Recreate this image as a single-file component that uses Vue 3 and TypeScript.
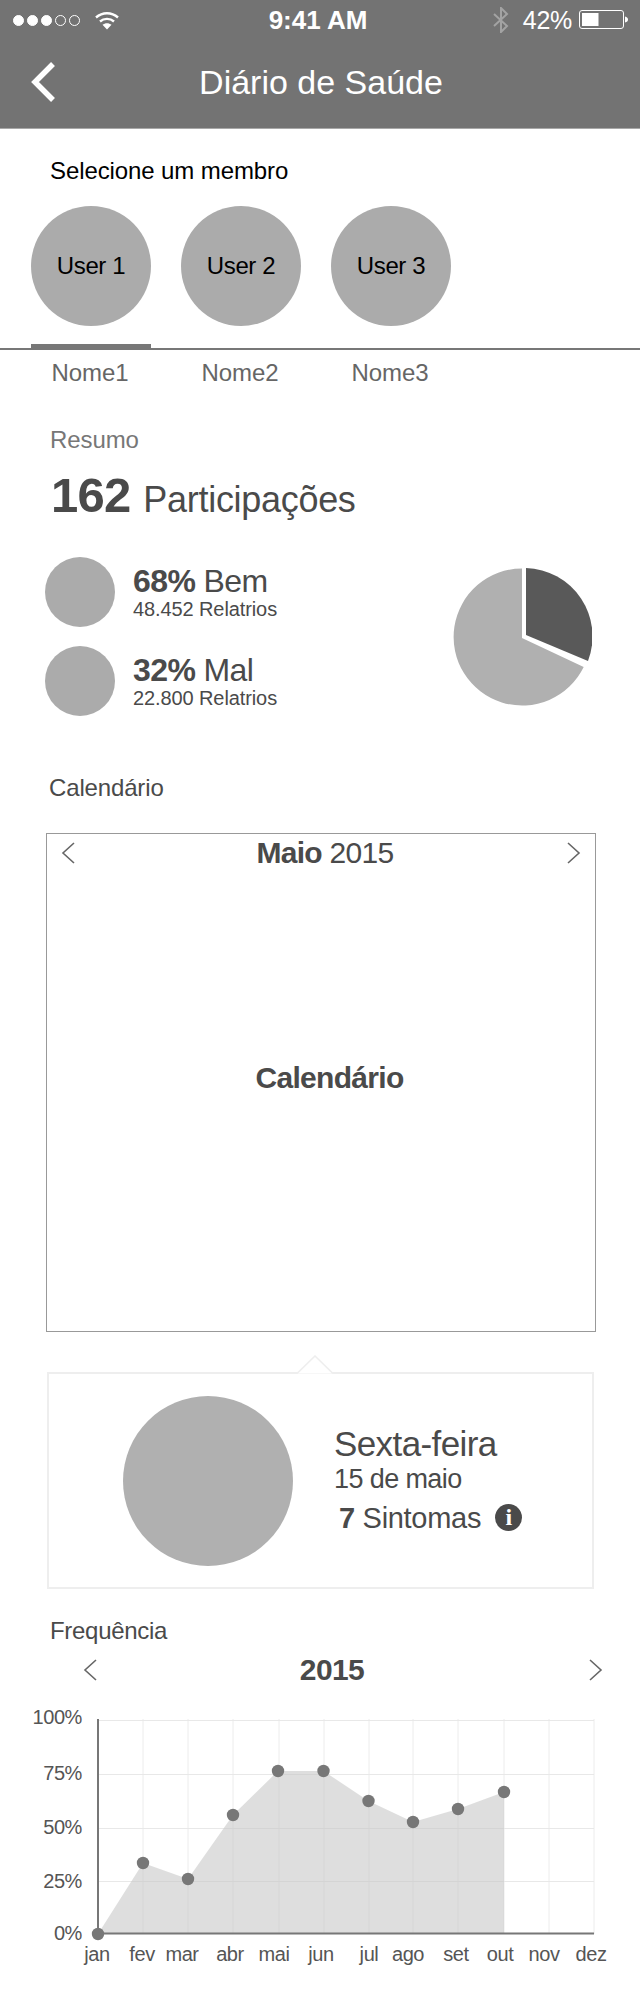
<script setup lang="ts">
const users = [
  { label: 'User 1', name: 'Nome1', active: true },
  { label: 'User 2', name: 'Nome2', active: false },
  { label: 'User 3', name: 'Nome3', active: false },
]
const stats = [
  { pct: '68%', word: 'Bem', sub: '48.452 Relatrios' },
  { pct: '32%', word: 'Mal', sub: '22.800 Relatrios' },
]
const xGrid = [143, 188, 233, 279, 324, 369, 413, 458, 504, 549, 594]
const yGrid = [1, 55, 109, 162]
const pts: [number, number][] = [
  [98, 215], [143, 144], [188, 160], [233, 96], [278, 52],
  [323.5, 52], [368.5, 82], [413, 103], [458, 90], [504, 73],
]
const area = 'M98 215 ' + pts.map(p => `L${p[0]} ${p[1]}`).join(' ') + ' L504 215 Z'
const yLabels = [
  { t: '100%', y: 5 }, { t: '75%', y: 61 }, { t: '50%', y: 115 }, { t: '25%', y: 169 }, { t: '0%', y: 221 },
]
const xLabels = [
  { t: 'jan', x: 97 }, { t: 'fev', x: 142 }, { t: 'mar', x: 182 }, { t: 'abr', x: 230 },
  { t: 'mai', x: 274 }, { t: 'jun', x: 321 }, { t: 'jul', x: 369 }, { t: 'ago', x: 408 },
  { t: 'set', x: 456 }, { t: 'out', x: 500 }, { t: 'nov', x: 544 }, { t: 'dez', x: 591 },
]
</script>

<template>
  <div class="page">
    <header class="head">
      <div class="status">
        <div class="st-left">
          <span class="dot on"></span><span class="dot on"></span><span class="dot on"></span><span class="dot"></span><span class="dot"></span>
          <svg class="wifi" width="24" height="19" viewBox="0 0 24 19">
            <path d="M1 6.5C7.5 .8 16.5 .8 23 6.5" fill="none" stroke="#fff" stroke-width="2.4" />
            <path d="M5 10.5C9 7 15 7 19 10.5" fill="none" stroke="#fff" stroke-width="2.4" />
            <path d="M7.5 13.8C10 11.6 14 11.6 16.5 13.8L12 18.5Z" fill="#fff" />
          </svg>
        </div>
        <div class="time">9:41 AM</div>
        <div class="st-right">
          <svg class="bt" width="16" height="26" viewBox="0 0 16 26">
            <path d="M1 7L14 19L8 25V1L14 7L1 19" fill="none" stroke="#a3a3a3" stroke-width="2" />
          </svg>
          <span class="pct">42%</span>
          <svg class="batt" width="50" height="20" viewBox="0 0 50 20">
            <rect x=".5" y=".5" width="44" height="18" rx="2.5" fill="none" stroke="#fff" />
            <rect x="3" y="3" width="16.5" height="13" fill="#fff" />
            <path d="M46 6.5C48 7 49 8 49 9.5S48 12 46 12.5Z" fill="#fff" />
          </svg>
        </div>
      </div>
      <div class="nav">
        <svg class="back" width="26" height="42" viewBox="0 0 26 42">
          <path d="M23 3L5 21L23 39" fill="none" stroke="#fff" stroke-width="5.5" />
        </svg>
        <h1>Diário de Saúde</h1>
      </div>
    </header>

    <section class="members">
      <div class="lead">Selecione um membro</div>
      <div class="tabs">
        <div v-for="u in users" :key="u.name" class="tab">
          <div class="avatar">{{ u.label }}</div>
          <div class="bar" :class="{ active: u.active }"></div>
        </div>
      </div>
      <div class="names">
        <div v-for="u in users" :key="u.name" class="name">{{ u.name }}</div>
      </div>
    </section>

    <section class="summary">
      <div class="sec-muted">Resumo</div>
      <div class="total"><b>162</b> <span class="total-word">Participações</span></div>
      <div class="stat-row">
        <div class="stats">
          <div v-for="s in stats" :key="s.word" class="stat">
            <div class="stat-dot"></div>
            <div>
              <div class="stat-main"><b>{{ s.pct }}</b> {{ s.word }}</div>
              <div class="stat-sub">{{ s.sub }}</div>
            </div>
          </div>
        </div>
        <svg class="pie" width="140" height="140" viewBox="0 0 140 140">
          <path d="M70 71L70 1.5A68.5 68.5 0 1 0 131.7 100Z" fill="#b0b0b0" />
          <path d="M74 68L74 1A68.5 68.5 0 0 1 136 94Z" fill="#595959" />
        </svg>
      </div>
    </section>

    <section class="calendar">
      <div class="sec-title">Calendário</div>
      <div class="cal-box">
        <div class="cal-head">
          <svg class="chev" width="14" height="22" viewBox="0 0 14 22"><path d="M13 1L2 11L13 21" /></svg>
          <div class="cal-month"><b>Maio</b> 2015</div>
          <svg class="chev" width="14" height="22" viewBox="0 0 14 22"><path d="M1 1L12 11L1 21" /></svg>
        </div>
        <div class="cal-body">Calendário</div>
      </div>
      <div class="pop">
        <svg class="pop-arrow" width="38" height="19" viewBox="0 0 38 19">
          <path d="M1 18.5L19 1L37 18.5" fill="#fff" stroke="#eee" stroke-width="1.5" />
        </svg>
        <div class="pop-dot"></div>
        <div class="pop-text">
          <div class="pop-day">Sexta-feira</div>
          <div class="pop-date">15 de maio</div>
          <div class="pop-sym"><span><b>7</b> Sintomas</span><span class="info">i</span></div>
        </div>
      </div>
    </section>

    <section class="freq">
      <div class="sec-freq">Frequência</div>
      <div class="freq-head">
        <svg class="chev" width="14" height="22" viewBox="0 0 14 22"><path d="M13 1L2 11L13 21" /></svg>
        <div class="freq-year">2015</div>
        <svg class="chev" width="14" height="22" viewBox="0 0 14 22"><path d="M1 1L12 11L1 21" /></svg>
      </div>
      <svg class="chart" width="640" height="280" viewBox="0 -20 640 280">
        <line v-for="x in xGrid" :key="x" :x1="x" y1="0" :x2="x" y2="215" stroke="#ececec" />
        <line v-for="y in yGrid" :key="y" x1="98" :y1="y + 0.5" x2="594" :y2="y + 0.5" stroke="#e8e8e8" stroke-width="1" />
        <path :d="area" fill="#c6c6c6" fill-opacity=".58" />
        <line x1="98" y1="0" x2="98" y2="215" stroke="#777" stroke-width="2" />
        <line x1="97" y1="214.5" x2="594" y2="214.5" stroke="#777" stroke-width="2" />
        <circle v-for="p in pts" :key="p[0]" :cx="p[0]" :cy="p[1]" r="6.2" fill="#777" />
        <text v-for="l in yLabels" :key="l.t" x="82" :y="l.y" text-anchor="end" class="tick">{{ l.t }}</text>
        <text v-for="l in xLabels" :key="l.t" :x="l.x" y="242" text-anchor="middle" class="tick">{{ l.t }}</text>
      </svg>
    </section>
  </div>
</template>

<style>
html, body { margin: 0; background: #fff; }
</style>

<style scoped>
.page {
  width: 640px;
  height: 2009px;
  overflow: hidden;
  font-family: "Liberation Sans", Arial, sans-serif;
  color: #4a4a4a;
  background: #fff;
}
.head {
  height: 129px;
  background: #737373;
  border-bottom: 1px solid #a8a8a8;
  box-sizing: border-box;
  color: #fff;
}
.status {
  height: 40px;
  display: grid;
  grid-template-columns: 1fr auto 1fr;
  align-items: center;
}
.st-left {
  display: flex;
  align-items: center;
  gap: 3px;
  padding-left: 13px;
}
.dot {
  width: 11px;
  height: 11px;
  box-sizing: border-box;
  border: 1px solid #fff;
  border-radius: 50%;
}
.dot.on { background: #fff; }
.wifi { margin-left: 12px; }
.time {
  font-size: 26px;
  font-weight: 700;
  padding-right: 4px;
}
.st-right {
  display: flex;
  align-items: center;
  justify-content: flex-end;
  padding-right: 11px;
}
.pct { font-size: 25px; margin-left: 14px; margin-right: 7px; letter-spacing: -.3px; }
.nav {
  height: 88px;
  display: flex;
  align-items: center;
  position: relative;
  padding: 0 0 4px 30px;
  box-sizing: border-box;
}
.nav h1 {
  flex: 1;
  margin: 0 28px 0 -26px;
  text-align: center;
  font-size: 34px;
  font-weight: 400;
}
.back { flex: none; }

.members { padding-top: 27px; }
.lead {
  height: 30px;
  line-height: 30px;
  padding-left: 50px;
  font-size: 24px;
  color: #000;
  letter-spacing: -.1px;
}
.tabs {
  display: flex;
  gap: 30px;
  padding: 20px 0 0 31px;
  border-bottom: 2px solid #777;
}
.tab { width: 120px; }
.avatar {
  width: 120px;
  height: 120px;
  border-radius: 50%;
  background: #ababab;
  color: #000;
  font-size: 24px;
  letter-spacing: -.4px;
  display: flex;
  align-items: center;
  justify-content: center;
}
.bar { height: 4px; margin-top: 18px; }
.bar.active { background: #777; }
.names {
  display: flex;
  gap: 30px;
  padding-left: 30px;
}
.name {
  width: 120px;
  height: 46px;
  line-height: 46px;
  text-align: center;
  font-size: 24px;
  color: #666;
  letter-spacing: -.1px;
}

.summary { padding: 29px 48px 0 45px; }
.sec-muted {
  height: 30px;
  line-height: 30px;
  padding-left: 5px;
  font-size: 24px;
  color: #777;
  letter-spacing: -.1px;
}
.total {
  margin-top: 12px;
  padding-left: 6px;
  height: 56px;
  line-height: 56px;
  font-size: 36px;
  letter-spacing: -.3px;
}
.total b { font-size: 49px; letter-spacing: -.7px; }
.total-word { margin-left: 3px; }
.stat-row {
  margin-top: 34px;
  display: flex;
  align-items: center;
  justify-content: space-between;
}
.stats { display: flex; flex-direction: column; gap: 19px; }
.stat { display: flex; align-items: center; gap: 18px; }
.stat-dot {
  width: 70px;
  height: 70px;
  border-radius: 50%;
  background: #ababab;
}
.stat-main { font-size: 32px; line-height: 34px; letter-spacing: -.6px; }
.stat-sub { font-size: 20px; line-height: 22px; letter-spacing: -.1px; }

.calendar { padding: 57px 44px 0 46px; }
.sec-title {
  height: 30px;
  line-height: 30px;
  padding-left: 3px;
  font-size: 24px;
  letter-spacing: -.15px;
}
.cal-box {
  margin-top: 30px;
  height: 499px;
  box-sizing: border-box;
  border: 1px solid #999;
  display: flex;
  flex-direction: column;
}
.cal-head {
  display: flex;
  align-items: center;
  justify-content: space-between;
  padding: 7px 14px 0;
}
.chev { flex: none; }
.chev path { fill: none; stroke: #666; stroke-width: 1.6; }
.cal-month { font-size: 30px; letter-spacing: -.7px; line-height: 24px; margin-left: 8px; }
.cal-body {
  flex: 1;
  display: flex;
  align-items: center;
  justify-content: center;
  font-size: 30px;
  font-weight: 700;
  letter-spacing: -.7px;
  padding-bottom: 41px;
  padding-left: 17px;
}
.pop {
  position: relative;
  margin: 40px 2px 0 1px;
  height: 217px;
  box-sizing: border-box;
  border: 2px solid #eee;
  display: flex;
  align-items: center;
  padding-left: 74px;
}
.pop-arrow { position: absolute; left: 247px; top: -19px; }
.pop-dot {
  width: 170px;
  height: 170px;
  border-radius: 50%;
  background: #b0b0b0;
  flex: none;
}
.pop-text { margin-left: 41px; padding-bottom: 4px; }
.pop-day { font-size: 35px; line-height: 40px; letter-spacing: -.6px; }
.pop-date { font-size: 27px; line-height: 30px; letter-spacing: -.6px; }
.pop-sym {
  display: flex;
  align-items: center;
  gap: 14px;
  padding-left: 5px;
  margin-top: 8px;
  font-size: 29px;
  line-height: 32px;
  letter-spacing: -.3px;
}
.info {
  width: 27px;
  height: 27px;
  border-radius: 50%;
  background: #4a4a4a;
  color: #fff;
  font-family: "Liberation Serif", serif;
  font-weight: 700;
  font-size: 24px;
  line-height: 27px;
  text-align: center;
}

.freq { padding-top: 27px; }
.sec-freq {
  height: 30px;
  line-height: 30px;
  padding-left: 50px;
  font-size: 24px;
  letter-spacing: -.3px;
}
.freq-head {
  display: flex;
  align-items: center;
  justify-content: space-between;
  margin: 9px 37px 0 83px;
  height: 30px;
}
.freq-year { font-size: 30px; font-weight: 700; letter-spacing: -.6px; margin-right: 22px; }
.chart { display: block; margin-top: 14px; }
.tick { font-size: 20px; fill: #555; letter-spacing: -.4px; font-family: "Liberation Sans", Arial, sans-serif; }
</style>
